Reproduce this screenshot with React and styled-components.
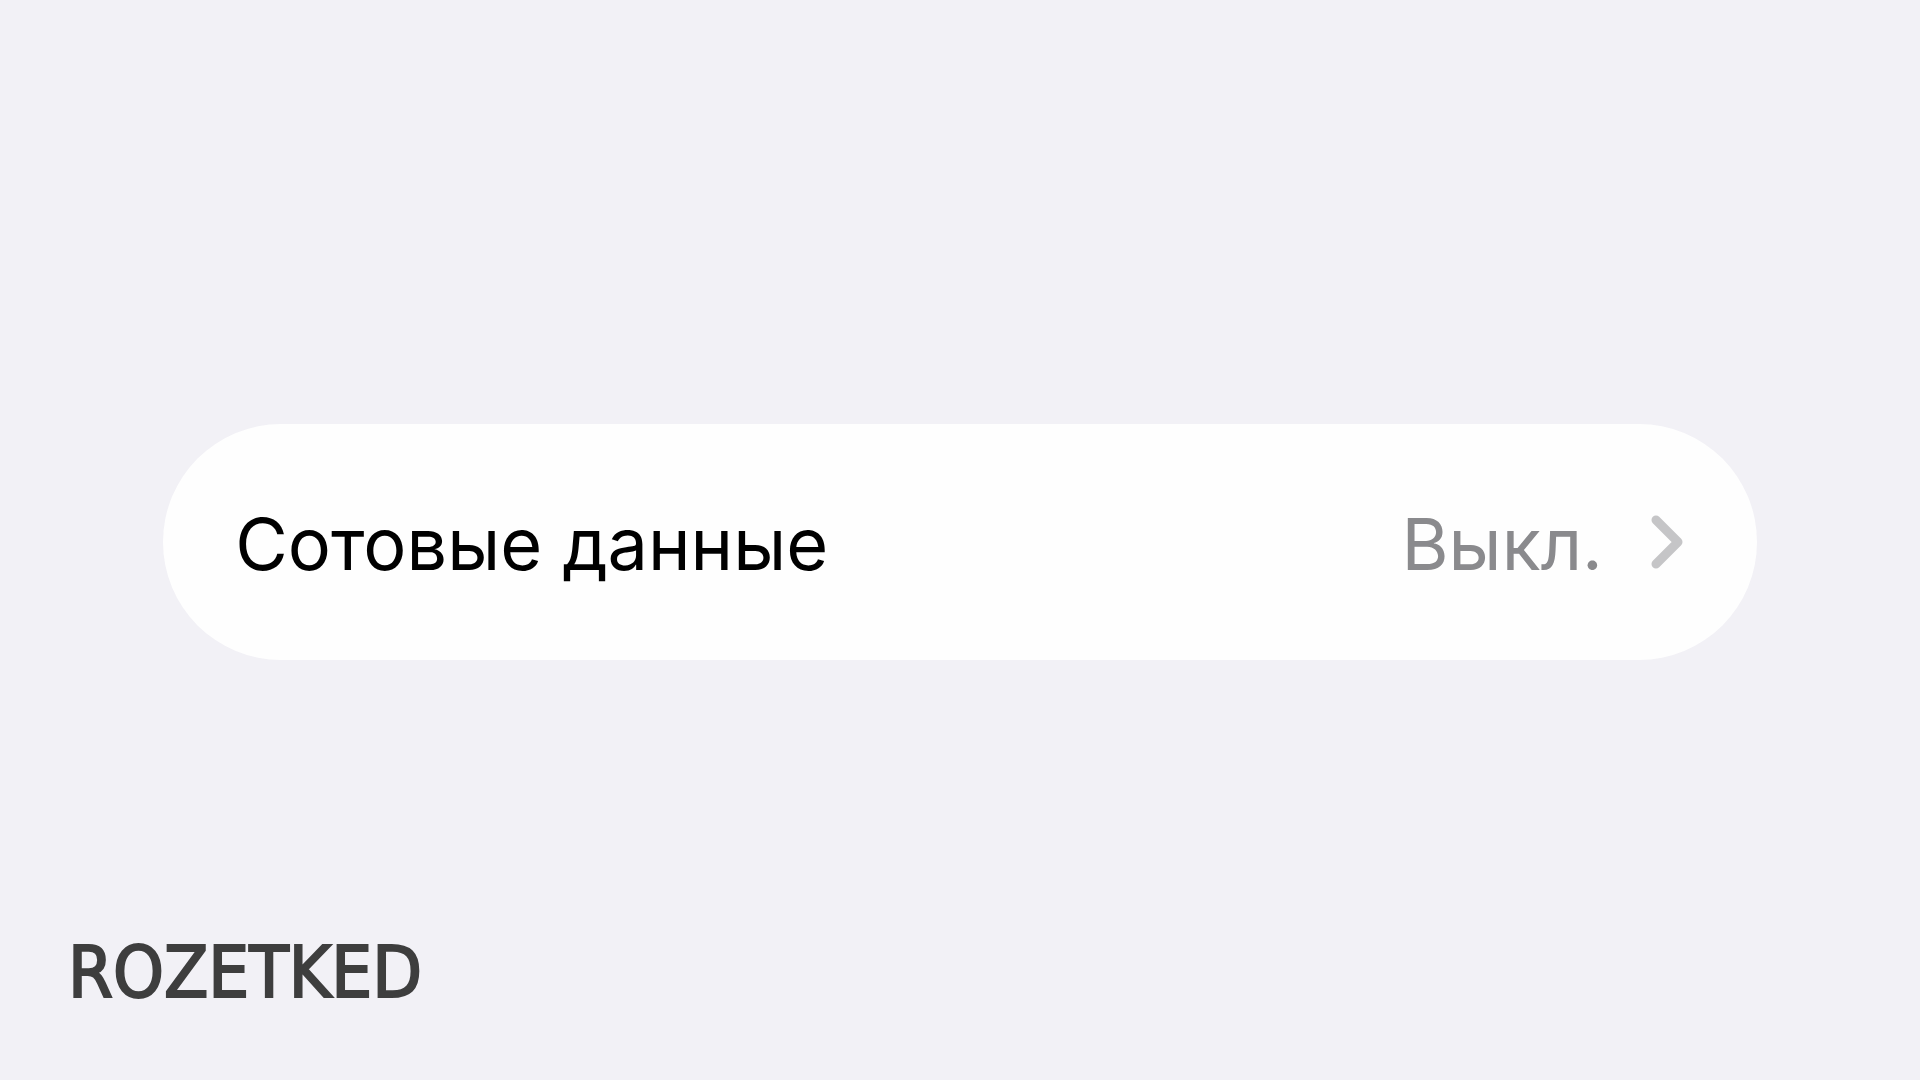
import React from 'react';
import styled, { createGlobalStyle } from 'styled-components';

const GlobalStyle = createGlobalStyle`
  * {
    box-sizing: border-box;
  }

  body {
    margin: 0;
    background: #f2f1f6;
    font-family: Inter, Roboto, "Liberation Sans", sans-serif;
  }
`;

const Page = styled.div`
  display: grid;
  grid-template-rows: 1fr auto 1fr;
  min-height: 100vh;
  padding-top: 4px;
`;

const Settings = styled.main`
  grid-row: 2;
  padding: 0 8.5%;
`;

const Row = styled.button`
  display: flex;
  align-items: center;
  width: 100%;
  padding: 70px 74px 70px 72px;
  border: 0;
  border-radius: 120px;
  background: #fefefe;
  font: inherit;
  font-size: 72px;
  line-height: 92px;
  text-align: left;
  cursor: pointer;
`;

const Text = styled.span`
  padding-top: 4px;
`;

const Label = styled(Text)`
  flex: 1;
  color: #000;
`;

const Value = styled(Text)`
  margin-right: 48px;
  color: #8a8a8d;
`;

const Chevron = styled.svg`
  flex: none;
  width: 32px;
  height: 54px;
  fill: none;
  stroke: #c5c5c7;
  stroke-width: 9;
  stroke-linecap: round;
  stroke-linejoin: round;
`;

const Footer = styled.footer`
  grid-row: 3;
  align-self: end;
  padding: 0 68px 68px;
`;

const Logo = styled.a`
  color: #3e3e3e;
  font-family: "DejaVu Sans Condensed", "DejaVu Sans", sans-serif;
  font-size: 72px;
  line-height: 80px;
  text-decoration: none;
  -webkit-text-stroke: 2px #3e3e3e;
`;

function SettingsRow({ label, value }) {
  return (
    <Row type="button">
      <Label>{label}</Label>
      <Value>{value}</Value>
      <Chevron viewBox="0 0 32 54" aria-hidden="true">
        <path d="M5 5 27 27 5 49" />
      </Chevron>
    </Row>
  );
}

function App() {
  return (
    <>
      <GlobalStyle />
      <Page>
        <Settings>
          <SettingsRow label="Сотовые данные" value="Выкл." />
        </Settings>
        <Footer>
          <Logo href="/">ROZETKED</Logo>
        </Footer>
      </Page>
    </>
  );
}

export default App;
